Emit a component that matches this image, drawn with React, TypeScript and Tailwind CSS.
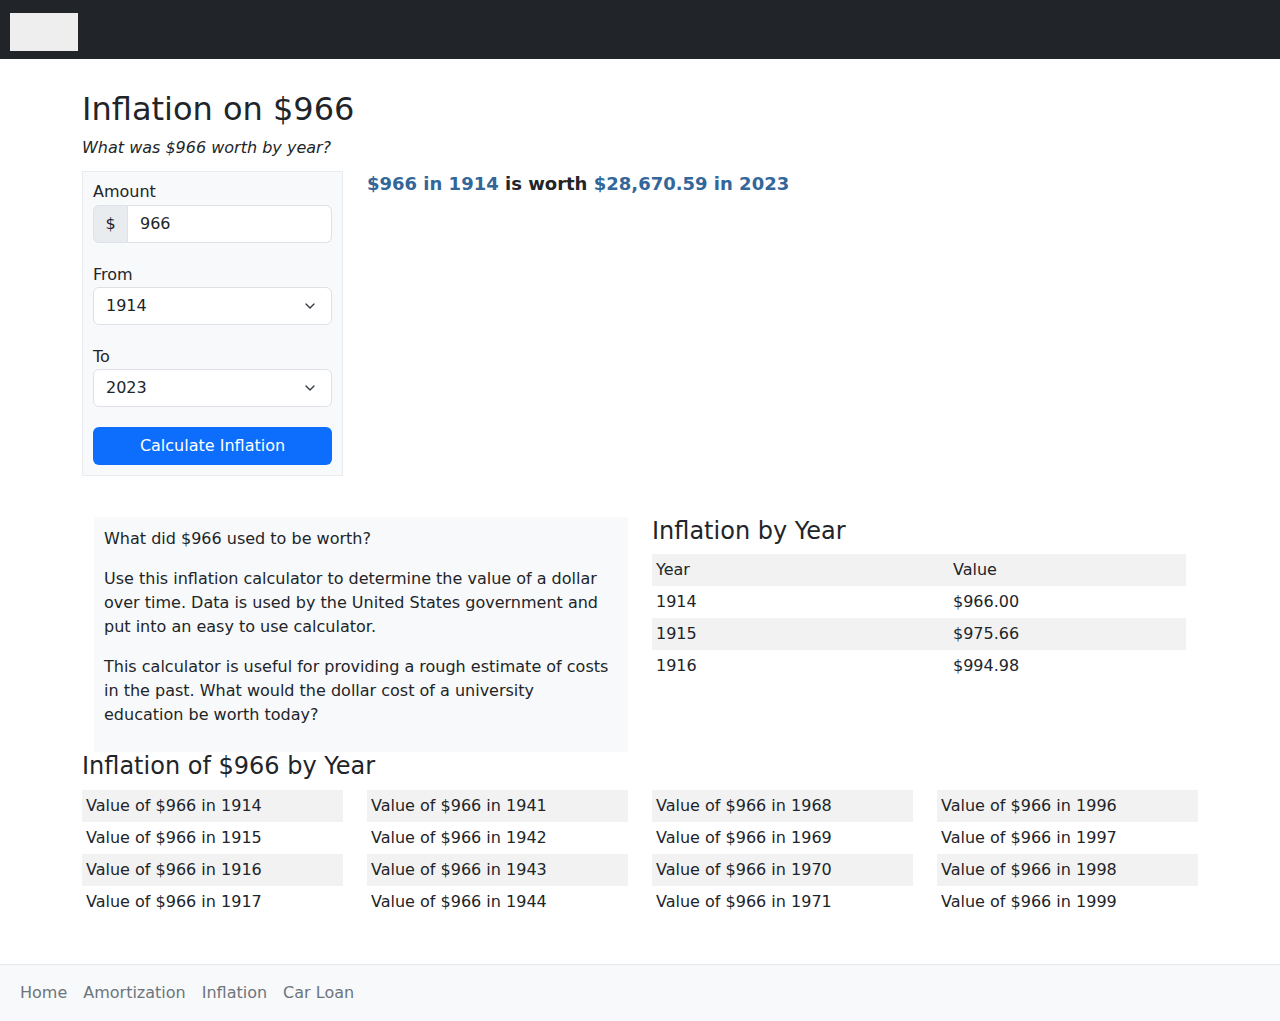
import { ChevronDown } from 'lucide-react';

const tableRows = [
  { year: '1914', value: '$966.00' },
  { year: '1915', value: '$975.66' },
  { year: '1916', value: '$994.98' },
];

const yearColumns = [
  ['1914', '1915', '1916', '1917'],
  ['1941', '1942', '1943', '1944'],
  ['1968', '1969', '1970', '1971'],
  ['1996', '1997', '1998', '1999'],
];

function SelectBox({ value }: { value: string }) {
  return (
    <div className="flex h-[38px] items-center justify-between rounded-md border border-[#dee2e6] bg-white pl-3 pr-[13px]">
      <span>{value}</span>
      <ChevronDown size={16} strokeWidth={2} className="text-[#343a40]" />
    </div>
  );
}

export default function App() {
  return (
    <div className="min-h-[1021px] bg-white font-['DejaVu_Sans',sans-serif] text-base leading-6 text-[#212529]">
      <nav className="h-[59px] bg-[#212529] px-[10px] pt-[13px]">
        <div className="h-[38px] w-[68px] bg-[#eeeeee]" />
      </nav>

      <main className="mx-auto w-[1116px] pt-[31px]">
        <h1 className="mb-2 text-[32px] leading-[1.2]">Inflation on $966</h1>
        <p className="mb-[11px] italic">What was $966 worth by year?</p>

        <div className="flex gap-6">
          <div className="w-[261px] shrink-0 border border-[#e9ecef] bg-[#f8f9fa] p-[10px] pt-[8px]">
            <label className="block">Amount</label>
            <div className="mt-[1px] flex h-[38px]">
              <span className="flex w-[35px] items-center justify-center rounded-l-md border border-[#dee2e6] bg-[#e9ecef]">$</span>
              <div className="flex flex-1 items-center rounded-r-md border border-l-0 border-[#dee2e6] bg-white px-3">966</div>
            </div>

            <label className="mt-5 block">From</label>
            <SelectBox value="1914" />

            <label className="mt-5 block">To</label>
            <SelectBox value="2023" />

            <button className="mt-5 flex h-[38px] w-full items-center justify-center rounded-md bg-[#0d6efd] text-white">
              Calculate Inflation
            </button>
          </div>

          <div className="text-[18px] font-bold leading-[26px]">
            <span className="text-[#336699]">$966 in 1914</span> is worth{' '}
            <span className="text-[#336699]">$28,670.59 in 2023</span>
          </div>
        </div>

        <div className="mt-[41px] flex gap-6">
          <div className="w-[546px] pl-3">
            <div className="bg-[#f8f9fa] px-[10px] pb-[9px] pt-[10px]">
              <p className="mb-4">What did $966 used to be worth?</p>
              <p className="mb-4">
                Use this inflation calculator to determine the value of a dollar over time. Data is used by the United States
                government and put into an easy to use calculator.
              </p>
              <p className="mb-4">
                This calculator is useful for providing a rough estimate of costs in the past. What would the dollar cost of a
                university education be worth today?
              </p>
            </div>
          </div>

          <div className="w-[534px]">
            <h4 className="mb-2 text-[24px] leading-[1.2]">Inflation by Year</h4>
            <table className="w-full border-collapse">
              <thead>
                <tr className="bg-[#f2f2f2]">
                  <th className="h-8 w-[297px] px-1 text-left font-normal">Year</th>
                  <th className="h-8 px-1 text-left font-normal">Value</th>
                </tr>
              </thead>
              <tbody>
                {tableRows.map((row, i) => (
                  <tr key={row.year} className={i % 2 === 1 ? 'bg-[#f2f2f2]' : ''}>
                    <td className="h-8 px-1">{row.year}</td>
                    <td className="h-8 px-1">{row.value}</td>
                  </tr>
                ))}
              </tbody>
            </table>
          </div>
        </div>

        <h4 className="mb-[9px] text-[24px] leading-[1.2]">Inflation of $966 by Year</h4>
        <div className="grid grid-cols-4 gap-x-6">
          {yearColumns.map((col) => (
            <div key={col[0]}>
              {col.map((year, i) => (
                <div key={year} className={`flex h-8 items-center px-1 ${i % 2 === 0 ? 'bg-[#f2f2f2]' : ''}`}>
                  Value of $966 in {year}
                </div>
              ))}
            </div>
          ))}
        </div>
      </main>

      <footer className="mt-[46px] border-t border-[#e5e7eb] bg-[#f8f9fa] px-5 py-4">
        <div className="flex gap-4 text-[#6c757d]">
          <span>Home</span>
          <span>Amortization</span>
          <span>Inflation</span>
          <span>Car Loan</span>
        </div>
      </footer>
    </div>
  );
}
